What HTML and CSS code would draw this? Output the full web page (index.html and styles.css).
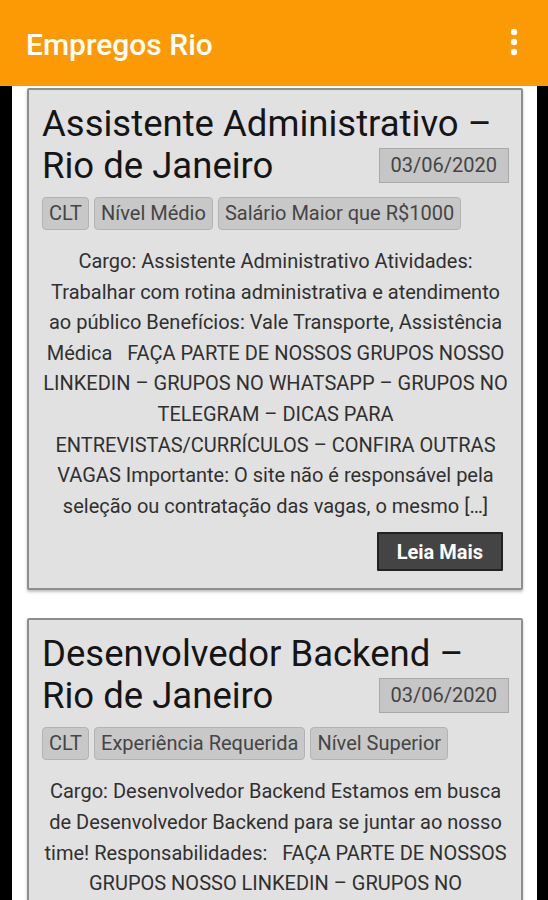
FILE: index.html
```html
<!DOCTYPE html>
<html lang="pt-BR">
<head>
<meta charset="utf-8">
<title>Empregos Rio</title>
<link rel="stylesheet" href="styles.css">
</head>
<body>
<header class="appbar">
  <h1 class="appbar-title">Empregos Rio</h1>
  <svg class="appbar-menu" width="24" height="32" viewBox="0 0 24 32" aria-hidden="true">
    <circle cx="12" cy="6" r="3.2" fill="#fff"/>
    <circle cx="12" cy="16" r="3.2" fill="#fff"/>
    <circle cx="12" cy="26" r="3.2" fill="#fff"/>
  </svg>
</header>
<main class="content">
  <article class="card">
    <h2 class="card-title">Assistente Administrativo – <span class="date">03/06/2020</span>Rio de Janeiro</h2>
    <div class="tags">
      <span class="tag">CLT</span>
      <span class="tag">Nível Médio</span>
      <span class="tag">Salário Maior que R$1000</span>
    </div>
    <p class="excerpt">Cargo: Assistente Administrativo Atividades: Trabalhar com rotina administrativa e atendimento ao público Benefícios: Vale Transporte, Assistência Médica &nbsp; FAÇA PARTE DE NOSSOS GRUPOS NOSSO LINKEDIN – GRUPOS NO WHATSAPP – GRUPOS NO TELEGRAM – DICAS PARA ENTREVISTAS/CURRÍCULOS – CONFIRA OUTRAS VAGAS Importante: O site não é responsável pela seleção ou contratação das vagas, o mesmo […]</p>
    <div class="actions"><button class="btn">Leia Mais</button></div>
  </article>
  <article class="card">
    <h2 class="card-title">Desenvolvedor Backend – <span class="date">03/06/2020</span>Rio de Janeiro</h2>
    <div class="tags">
      <span class="tag">CLT</span>
      <span class="tag">Experiência Requerida</span>
      <span class="tag">Nível Superior</span>
    </div>
    <p class="excerpt">Cargo: Desenvolvedor Backend Estamos em busca de Desenvolvedor Backend para se juntar ao nosso time! Responsabilidades: &nbsp; FAÇA PARTE DE NOSSOS GRUPOS NOSSO LINKEDIN – GRUPOS NO WHATSAPP – GRUPOS NO TELEGRAM – DICAS PARA ENTREVISTAS/CURRÍCULOS – CONFIRA OUTRAS VAGAS Importante: O site não é responsável pela seleção ou contratação das vagas, o mesmo […]</p>
    <div class="actions"><button class="btn">Leia Mais</button></div>
  </article>
</main>
</body>
</html>
```

FILE: styles.css
```css
* { box-sizing: border-box; }
html, body { margin: 0; padding: 0; }
body {
  background: #000;
  font-family: Roboto, "Noto Sans", sans-serif;
  height: 900px;
  overflow: hidden;
}
.appbar {
  height: 86px;
  background: #fb9a05;
  display: flex;
  align-items: center;
  justify-content: space-between;
  padding: 0 22px 0 26px;
  position: relative;
  z-index: 2;
}
.appbar-title {
  margin: 0;
  color: #fff;
  font-size: 30px;
  font-weight: 500;
  padding-top: 2px;
}
.appbar-menu { display: block; margin-top: -2px; }
.content {
  margin: 0 11px 0 12px;
  background: #fff;
  padding: 2px 14px 20px 15px;
  display: flex;
  flex-direction: column;
  gap: 28px;
  min-height: 814px;
}
.card {
  background: #e1e1e1;
  border: 2px solid #8e8e8e;
  border-radius: 2px;
  box-shadow: 0 2px 3px rgba(0,0,0,0.25);
  padding: 13px 12px 17px 13px;
}
.card-title {
  margin: 0;
  font-size: 36.5px;
  font-weight: 400;
  line-height: 42px;
  color: #151515;
}
.date {
  float: right;
  margin-top: 3px;
  height: 35px;
  padding: 0 11px;
  background: #c6c6c6;
  border: 1px solid #a9a9a9;
  font-size: 20px;
  line-height: 33px;
  color: #444;
  font-weight: 400;
}
.tags {
  display: flex;
  flex-wrap: wrap;
  gap: 5px;
  margin-top: 10px;
}
.tag {
  height: 33px;
  padding: 0 6px;
  background: #c8c8c8;
  border: 1px solid #b3b3b3;
  border-radius: 4px;
  font-size: 20px;
  line-height: 31px;
  color: #454545;
}
.excerpt {
  margin: 16px 0 0;
  text-align: center;
  font-size: 20px;
  line-height: 30.6px;
  color: #303030;
}
.actions {
  display: flex;
  justify-content: flex-end;
  margin-top: 11px;
  padding-right: 6px;
}
.btn {
  height: 39px;
  padding: 0 18px;
  background: #444;
  border: 2px solid #222;
  border-radius: 1px;
  color: #fff;
  font-family: Roboto, "Noto Sans", sans-serif;
  font-size: 20px;
  font-weight: 700;
}
```
